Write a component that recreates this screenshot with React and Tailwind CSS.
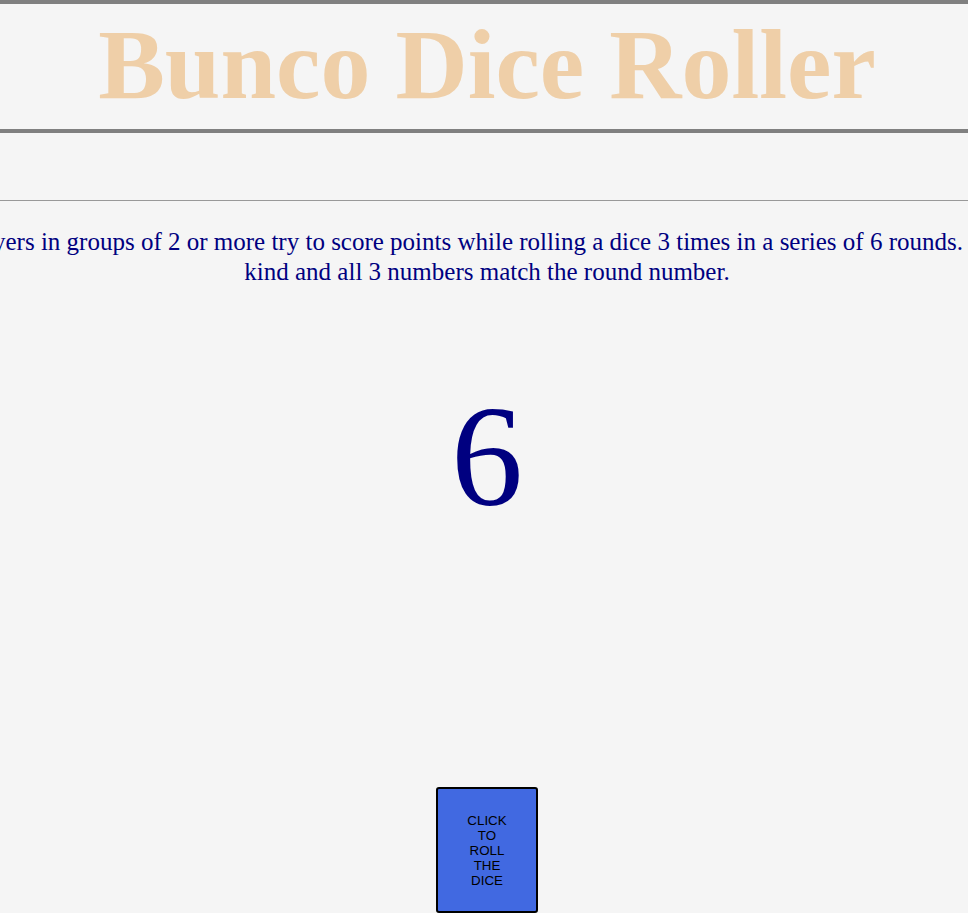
export default function App() {
  return (
    <div className="min-h-screen w-full overflow-hidden bg-[#f5f5f5] font-['Liberation_Serif',serif]">
      <header className="border-y-4 border-[#808080] pt-[11px] pb-[14px] pl-[6px] text-center">
        <h1 className="text-[100px] font-bold leading-[100px] text-[#efcfa8]">Bunco Dice Roller</h1>
      </header>
      <div className="mt-[67px] h-px bg-[#999999]" />
      <div className="mt-[26px] flex flex-col items-center pl-[6px] text-[25px] leading-[30px] text-[#000080]">
        <p className="mr-[50px] whitespace-nowrap">Players in groups of 2 or more try to score points while rolling a dice 3 times in a series of 6 rounds.</p>
        <p className="whitespace-nowrap">kind and all 3 numbers match the round number.</p>
      </div>
      <div className="mt-[98px] flex justify-center pl-[6px]">
        <span className="text-[144px] leading-[144px] text-[#000080]">6</span>
      </div>
      <div className="mt-[258px] flex justify-center pl-[6px]">
        <button className="flex h-[126px] w-[102px] items-center justify-center rounded-[3px] border-2 border-black bg-[#4169e1] font-['Liberation_Sans',Arial,sans-serif] text-[13.33px] leading-[15px] text-black">
          <span className="block w-[42px] text-center">CLICK TO ROLL THE DICE</span>
        </button>
      </div>
    </div>
  );
}
